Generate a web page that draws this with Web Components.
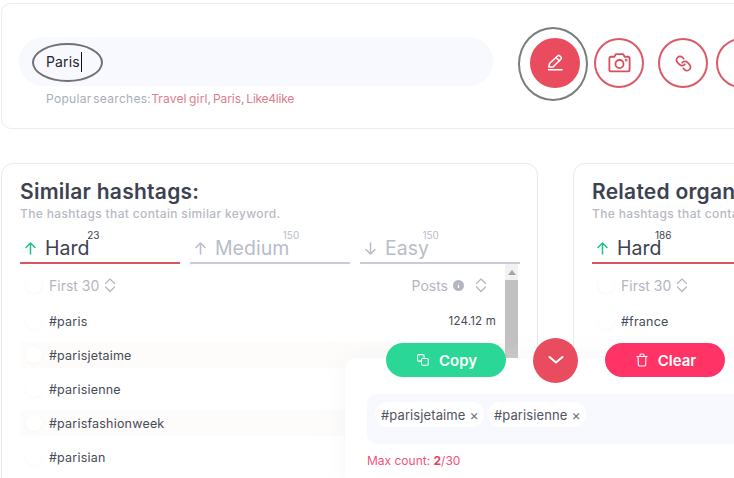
<!DOCTYPE html>
<html>
<head>
<meta charset="utf-8">
<title>Hashtags</title>
<style>
  html, body { margin: 0; height: 100%; overflow: hidden; background: #fff; }
  body { font-family: Inter, "Noto Sans", sans-serif; position: relative; }
  #page { width: 1200px; padding: 3px 0 0 1px; }
  #cols { display: flex; gap: 35px; margin-top: 34px; }
</style>
</head>
<body>
<div id="page">
  <search-card value="Paris">
    <round-button filled ring icon="pen"></round-button>
    <round-button icon="camera"></round-button>
    <round-button icon="link"></round-button>
    <round-button></round-button>
  </search-card>
  <div id="cols">
    <hashtag-card title="Similar hashtags:" subtitle="The hashtags that contain similar keyword." counts="23,150,150" scroll>
      <hash-row name="#paris" posts="124.12 m"></hash-row>
      <hash-row name="#parisjetaime" posts="" alt></hash-row>
      <hash-row name="#parisienne" posts=""></hash-row>
      <hash-row name="#parisfashionweek" posts="" alt></hash-row>
      <hash-row name="#parisian" posts=""></hash-row>
    </hashtag-card>
    <hashtag-card title="Related organic hashtags:" subtitle="The hashtags that contain related keyword." counts="186,150,150">
      <hash-row name="#france" posts=""></hash-row>
    </hashtag-card>
  </div>
</div>
<tag-basket>
  <tag-chip>#parisjetaime</tag-chip>
  <tag-chip>#parisienne</tag-chip>
</tag-basket>

<script>
const icons = {
  pen: '<path d="M3.8 14l.7-3.5L12.5 3a1.7 1.7 0 0 1 2.4 0l.9.9a1.7 1.7 0 0 1 0 2.4L8 14z"/><path d="M11 4.5l3.3 3.3"/><path d="M3.5 16.8H17"/>',
  camera: '<path d="M3 7.5A1.5 1.5 0 0 1 4.5 6h3l1.2-2.4h6.6L16.5 6h3A1.5 1.5 0 0 1 21 7.5v10a1.5 1.5 0 0 1-1.5 1.5h-15A1.5 1.5 0 0 1 3 17.5z"/><circle cx="12" cy="12.5" r="3.6"/><circle cx="18" cy="9" r=".4"/>',
  link: '<path d="M14 13a5 5 0 0 1-7.54.54l-3-3a5 5 0 0 1 7.07-7.07l1.72 1.71"/><path d="M10 11a5 5 0 0 1 7.54-.54l3 3a5 5 0 0 1-7.07 7.07l-1.71-1.71"/>'
};

class RoundButton extends HTMLElement {
  constructor() {
    super();
    this.attachShadow({ mode: 'open' });
    const name = this.getAttribute('icon');
    const box = name === 'pen' ? '0 0 20 20' : '0 0 24 24';
    this.shadowRoot.innerHTML = `
      <style>
        :host {
          display: flex;
          position: relative;
          flex: none;
          align-items: center;
          justify-content: center;
          box-sizing: border-box;
          width: 50px;
          height: 50px;
          border-radius: 50%;
          border: 2px solid #dc5a68;
          color: #d8505f;
        }
        :host([filled]) { background: #ea4c5f; border-color: #ea4c5f; color: #fff; }
        :host([ring])::after {
          content: '';
          position: absolute;
          box-sizing: border-box;
          left: -14px;
          top: -13px;
          width: 70px;
          height: 74px;
          border: 2.5px solid #7c7c7c;
          border-radius: 50%;
        }
        svg { fill: none; stroke: currentColor; stroke-width: 1.5; stroke-linecap: round; stroke-linejoin: round; }
        :host([icon=camera]) svg { width: 27px; height: 27px; stroke-width: 1.6; }
        :host([icon=link]) svg { width: 17px; height: 17px; stroke-width: 2.4; }
        :host([icon=pen]) svg { width: 20px; height: 20px; }
      </style>
      ${icons[name] ? `<svg viewBox="${box}">${icons[name]}</svg>` : ''}`;
  }
}
customElements.define('round-button', RoundButton);

class SearchCard extends HTMLElement {
  constructor() {
    super();
    this.attachShadow({ mode: 'open' });
    this.shadowRoot.innerHTML = `
      <style>
        :host {
          display: flex;
          box-sizing: border-box;
          width: 1160px;
          height: 126px;
          padding: 33px 17px 0;
          gap: 37px;
          border: 1px solid #ececec;
          border-radius: 10px;
        }
        .left { width: 474px; flex: none; }
        .pill {
          display: flex;
          align-items: center;
          position: relative;
          height: 49px;
          padding-left: 27px;
          border-radius: 25px;
          background: #f8f9fe;
          color: #23272f;
          font-size: 14px;
          letter-spacing: .15px;
        }
        .caret { width: 1px; height: 20px; background: #111; margin-left: 1px; }
        .mark {
          position: absolute;
          left: 13px;
          top: 6px;
          box-sizing: border-box;
          width: 71px;
          height: 39px;
          border: 2.5px solid #727272;
          border-radius: 50%;
        }
        .hint { margin: 5px 0 0 27px; font-size: 12px; line-height: 16px; color: #a9adb9; letter-spacing: .3px; white-space: nowrap; word-spacing: -2px; }
        .hint b { font-weight: 400; color: #dc7d8c; letter-spacing: .15px; word-spacing: -1px; }
        .hint b.city { letter-spacing: -.1px; }
        .hint b.last { letter-spacing: -.25px; }
        .hint i { font-style: normal; color: #8d8f99; }
        .btns { display: flex; gap: 14px; padding-top: 1px; height: 50px; }
        ::slotted(round-button:last-child) { margin-left: -6px; }
      </style>
      <div class="left">
        <div class="pill"><span>${this.getAttribute('value')}</span><span class="caret"></span><span class="mark"></span></div>
        <div class="hint">Popular searches:<b>Travel girl</b><i>,</i> <b class="city">Paris</b><i>,</i> <b class="last">Like4like</b></div>
      </div>
      <div class="btns"><slot></slot></div>`;
  }
}
customElements.define('search-card', SearchCard);

const sortIcon = '<svg viewBox="0 0 12 16" width="12" height="16" fill="none" stroke="currentColor" stroke-width="1.2" stroke-linecap="round" stroke-linejoin="round"><path d="M1.5 6.5L6 2l4.5 4.5M1.5 10L6 14.5 10.5 10"/></svg>';

class DiffTab extends HTMLElement {
  constructor() {
    super();
    this.attachShadow({ mode: 'open' });
    const down = this.hasAttribute('down');
    this.shadowRoot.innerHTML = `
      <style>
        :host {
          display: flex;
          align-items: center;
          flex: none;
          box-sizing: border-box;
          width: 160px;
          height: 29px;
          padding: 0 0 1px 4px;
          border-bottom: 2px solid #c9cbd9;
          color: #b9bcc9;
          font-size: 19.5px;
        }
        :host([active]) { border-bottom-color: #d9545b; color: #3c4250; }
        svg { width: 13px; height: 15px; fill: none; stroke: #b9bcc9; stroke-width: 1.5; stroke-linecap: round; stroke-linejoin: round; margin-right: 8px; }
        :host([active]) svg { stroke: #1dbf8a; }
        .label { position: relative; }
        sup { position: absolute; right: -10px; top: -7px; font-size: 10px; line-height: 12px; font-weight: 400; }
      </style>
      <svg viewBox="0 0 13 15">${down ? '<path d="M6.5 2v11M2 8.5l4.5 4.5 4.5-4.5"/>' : '<path d="M6.5 13V2M2 6.5L6.5 2 11 6.5"/>'}</svg>
      <span class="label">${this.getAttribute('label')}<sup>${this.getAttribute('count')}</sup></span>`;
  }
}
customElements.define('diff-tab', DiffTab);

class HashRow extends HTMLElement {
  constructor() {
    super();
    this.attachShadow({ mode: 'open' });
    this.shadowRoot.innerHTML = `
      <style>
        :host {
          display: flex;
          align-items: center;
          height: 26px;
          margin-bottom: 8px;
          padding: 0 9px 0 6px;
          color: #464b58;
          font-size: 12.5px;
          letter-spacing: .2px;
        }
        :host([alt]) { background: #fdfcfa; }
        .check { width: 16px; height: 16px; flex: none; margin-right: 7px; border-radius: 50%; background: #fff; box-shadow: 0 1px 3px rgba(120,120,140,.06); }
        .name { flex: 1; }
        .posts { font-size: 11.5px; }
      </style>
      <span class="check"></span>
      <span class="name">${this.getAttribute('name')}</span>
      <span class="posts">${this.getAttribute('posts')}</span>`;
  }
}
customElements.define('hash-row', HashRow);

class HashtagCard extends HTMLElement {
  constructor() {
    super();
    this.attachShadow({ mode: 'open' });
    const counts = this.getAttribute('counts').split(',');
    this.shadowRoot.innerHTML = `
      <style>
        :host {
          display: block;
          box-sizing: border-box;
          flex: none;
          width: 537px;
          height: 340px;
          padding: 15px 18px 0;
          border: 1px solid #e9e9ee;
          border-radius: 12px;
        }
        h2 { margin: 0; font-size: 21px; line-height: 26px; font-weight: 600; color: #3c4250; white-space: nowrap; letter-spacing: .25px; }
        p { margin: 1px 0 0; font-size: 12px; line-height: 16px; font-weight: 500; color: #b7b9c4; white-space: nowrap; letter-spacing: .35px; }
        .tabs { display: flex; gap: 10px; margin-top: 13px; }
        .body { display: flex; height: 230px; }
        .list { flex: 1; min-width: 0; }
        .head { display: flex; align-items: center; height: 26px; margin: 8px 0 10px; padding: 0 18px 0 6px; color: #b3b6c2; font-size: 14px; }
        .check { width: 16px; height: 16px; margin-right: 7px; border-radius: 50%; background: #fff; box-shadow: 0 1px 3px rgba(120,120,140,.07); }
        .head svg { margin-left: 5px; }
        .gap { flex: 1; }
        .info { width: 11px; height: 11px; margin-left: 4px; }
        .head .sort2 { margin-left: 6px; display: flex; }
        .bar { width: 13px; flex: none; margin-right: 1px; background: #f1f1f1; }
        .arrow { height: 16px; display: flex; align-items: center; justify-content: center; }
        .arrow i { border: 4px solid transparent; border-bottom: 5px solid #a3a3a3; border-top: 0; }
        .thumb { height: 200px; background: #c1c1c1; }
        :host(:not([scroll])) .bar { background: none; }
        :host(:not([scroll])) .bar > * { display: none; }
      </style>
      <h2>${this.getAttribute('title')}</h2>
      <p>${this.getAttribute('subtitle')}</p>
      <div class="tabs">
        <diff-tab active label="Hard" count="${counts[0]}"></diff-tab>
        <diff-tab label="Medium" count="${counts[1]}"></diff-tab>
        <diff-tab down label="Easy" count="${counts[2]}"></diff-tab>
      </div>
      <div class="body">
        <div class="list">
          <div class="head">
            <span class="check"></span><span>First 30</span>${sortIcon}
            <span class="gap"></span>
            <span>Posts</span>
            <svg class="info" viewBox="0 0 11 11"><circle cx="5.5" cy="5.5" r="5.5" fill="#b3b6c2"/><path d="M5.5 5v3M5.5 3v.6" stroke="#fff" stroke-width="1.3"/></svg>
            <span class="sort2">${sortIcon}</span>
          </div>
          <slot></slot>
        </div>
        <div class="bar"><div class="arrow"><i></i></div><div class="thumb"></div></div>
      </div>`;
  }
}
customElements.define('hashtag-card', HashtagCard);

class TagChip extends HTMLElement {
  constructor() {
    super();
    this.attachShadow({ mode: 'open' });
    this.shadowRoot.innerHTML = `
      <style>
        :host {
          display: flex;
          align-items: center;
          height: 25px;
          padding: 0 5px 0 6px;
          gap: 4px;
          border-radius: 12px;
          background: #fff;
          color: #50545e;
          font-size: 13px;
          white-space: nowrap;
          letter-spacing: .1px;
        }
        span { font-size: 14px; color: #6d707a; }
      </style>
      <slot></slot><span>×</span>`;
  }
}
customElements.define('tag-chip', TagChip);

class TagBasket extends HTMLElement {
  constructor() {
    super();
    this.attachShadow({ mode: 'open' });
    this.shadowRoot.innerHTML = `
      <style>
        :host {
          display: block;
          position: absolute;
          left: 345px;
          top: 358px;
          width: 560px;
          height: 130px;
          background: #fff;
          border-radius: 12px;
          box-shadow: 0 0 24px rgba(225,228,240,.35);
        }
        .actions { display: flex; align-items: center; gap: 27px; height: 46px; margin: -21px 0 0 41px; }
        .btn {
          display: flex;
          align-items: center;
          justify-content: center;
          box-sizing: border-box;
          gap: 10px;
          width: 120px;
          height: 34px;
          padding-left: 2px;
          border-radius: 17px;
          color: #fff;
          font-size: 15px;
          font-weight: 600;
        }
        .copy { background: #2ad796; }
        .clear { background: #ff3366; }
        .toggle { display: flex; align-items: center; justify-content: center; width: 45px; height: 45px; border-radius: 50%; background: #e84c5e; }
        .btn svg, .toggle svg { fill: none; stroke: #fff; stroke-linecap: round; stroke-linejoin: round; }
        .box {
          display: flex;
          align-items: flex-start;
          gap: 4px;
          box-sizing: border-box;
          height: 50px;
          margin: 11px 0 0 22px;
          padding: 8px;
          border-radius: 10px;
          background: #f8f9fe;
        }
        .max { margin: 9px 0 0 22px; font-size: 12px; line-height: 15px; color: #ee5577; }
        .max b { font-weight: 700; color: #e8405f; }
      </style>
      <div class="actions">
        <div class="btn copy">
          <svg viewBox="0 0 12 12" width="12" height="12" stroke-width="1.1"><rect x=".6" y=".6" width="6.5" height="6.5" rx="1.2"/><rect x="4.5" y="4.5" width="6.8" height="6.8" rx="1.2" fill="#2ad796"/></svg>
          <span>Copy</span>
        </div>
        <div class="toggle"><svg viewBox="0 0 16 10" width="16" height="10" stroke-width="2"><path d="M1.5 2l6.5 5.5L14.5 2"/></svg></div>
        <div class="btn clear">
          <svg viewBox="0 0 12 14" width="12" height="14" stroke-width="1.1"><path d="M.8 3.5h10.4M2 3.5l.4 8.6a1 1 0 0 0 1 .9h5.2a1 1 0 0 0 1-.9l.4-8.6M4 3.5V2a1 1 0 0 1 1-1h2a1 1 0 0 1 1 1v1.5"/></svg>
          <span>Clear</span>
        </div>
      </div>
      <div class="box"><slot></slot></div>
      <div class="max">Max count: <b>2</b>/30</div>`;
  }
}
customElements.define('tag-basket', TagBasket);
</script>
</body>
</html>
